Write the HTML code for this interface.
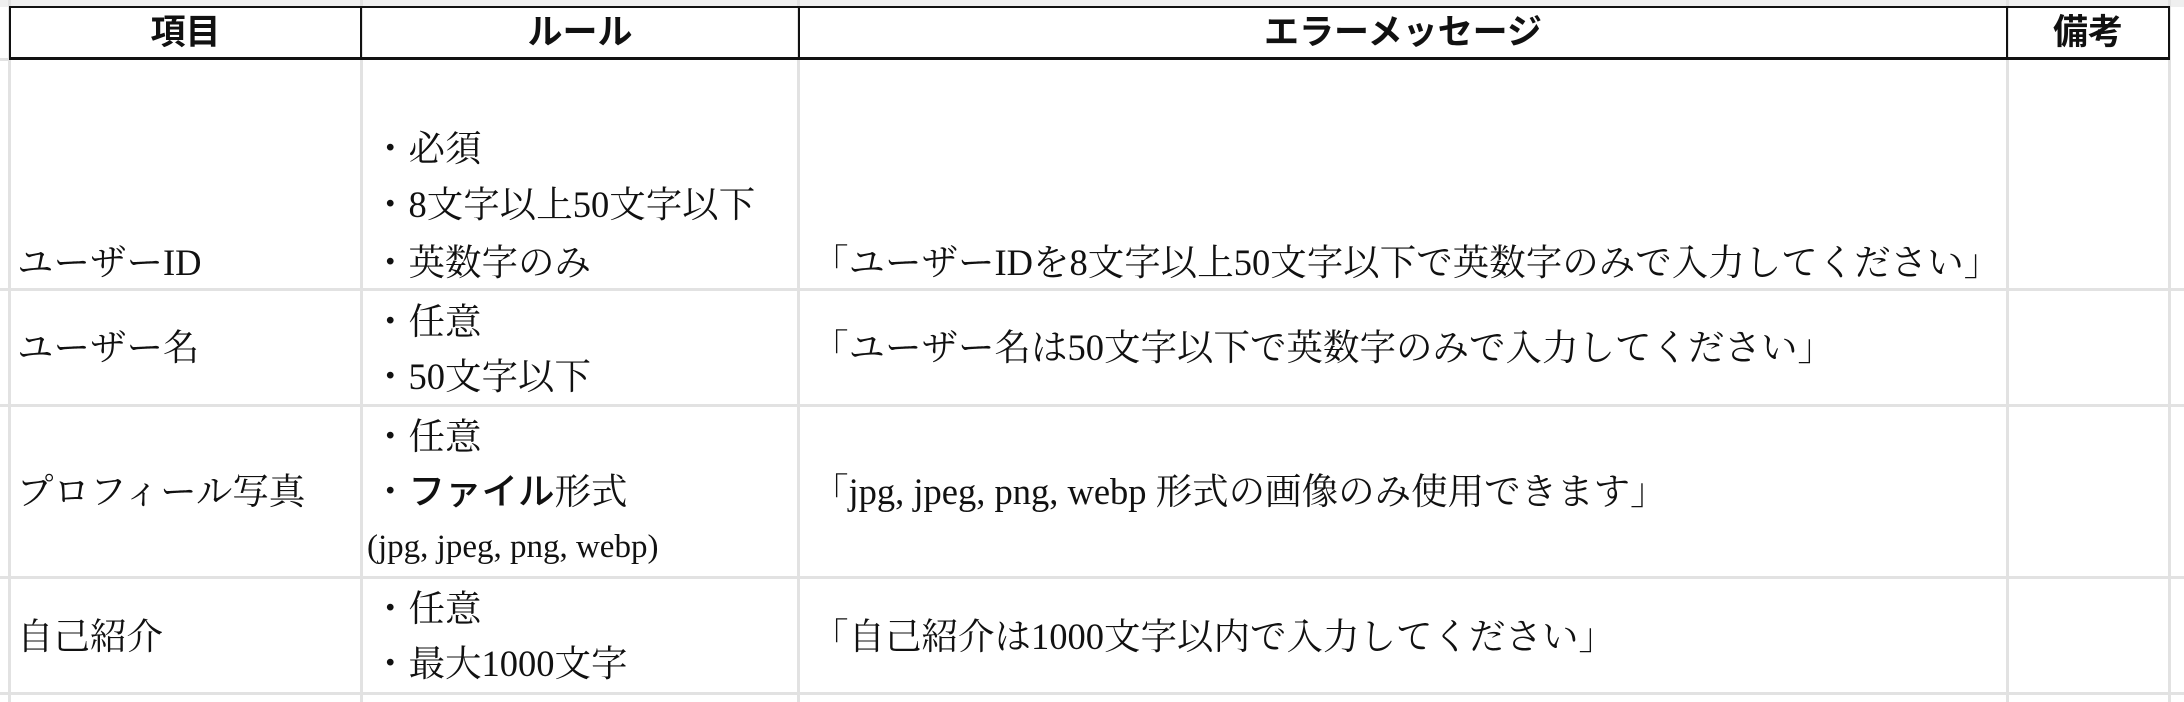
<!DOCTYPE html>
<html><head><meta charset="utf-8"><style>
body{margin:0;width:2184px;height:702px;background:#fff;position:relative;overflow:hidden;font-family:"Liberation Serif","Noto Serif CJK JP","Noto Serif CJK SC",serif;color:#111}
.l{position:absolute;background:#e2e2e2}
.b{position:absolute;background:#111}
.t{position:absolute;font-size:36.5px;line-height:40px;white-space:nowrap;transform:translateY(-50%)}
.h{position:absolute;top:7px;height:51px;line-height:51px;text-align:center;font-family:"Liberation Sans","Noto Sans CJK JP",sans-serif;font-weight:bold;font-size:35px}
.s{font-family:"Liberation Sans","Noto Sans CJK JP",sans-serif;font-weight:500}
</style></head><body>
<div class="l" style="left:0;top:0;width:2184px;height:7px;background:#efefef"></div>
<div class="l" style="left:0;top:288px;width:2184px;height:3px"></div>
<div class="l" style="left:0;top:404px;width:2184px;height:3px"></div>
<div class="l" style="left:0;top:576px;width:2184px;height:3px"></div>
<div class="l" style="left:0;top:692px;width:2184px;height:3px"></div>
<div class="l" style="left:0;top:58px;width:10px;height:3px"></div>
<div class="l" style="left:360px;top:0;width:3px;height:702px"></div>
<div class="l" style="left:797px;top:0;width:3px;height:702px"></div>
<div class="l" style="left:2006px;top:0;width:3px;height:702px"></div>
<div class="l" style="left:2168px;top:0;width:3px;height:702px"></div>
<div class="l" style="left:8px;top:0;width:3px;height:702px"></div>
<div class="b" style="left:9px;top:6px;width:2161px;height:2px"></div>
<div class="b" style="left:9px;top:57px;width:2161px;height:3px"></div>
<div class="b" style="left:9px;top:6px;width:2px;height:54px"></div>
<div class="b" style="left:360px;top:6px;width:2px;height:54px"></div>
<div class="b" style="left:798px;top:6px;width:2px;height:54px"></div>
<div class="b" style="left:2006px;top:6px;width:2px;height:54px"></div>
<div class="b" style="left:2168px;top:6px;width:2px;height:54px"></div>
<div class="h" style="left:10px;width:351px">項目</div>
<div class="h" style="left:361px;width:438px">ルール</div>
<div class="h" style="left:799px;width:1208px">エラーメッセージ</div>
<div class="h" style="left:2007px;width:162px">備考</div>
<div class="t" style="left:17px;top:263px">ユーザーID</div>
<div class="t" style="left:372px;top:149px">・必須</div>
<div class="t" style="left:372px;top:205px">・8文字以上50文字以下</div>
<div class="t" style="left:372px;top:263px">・英数字のみ</div>
<div class="t" style="left:812px;top:263px">「ユーザーIDを8文字以上50文字以下で英数字のみで入力してください」</div>
<div class="t" style="left:17px;top:348px">ユーザー名</div>
<div class="t" style="left:372px;top:322px">・任意</div>
<div class="t" style="left:372px;top:377px">・50文字以下</div>
<div class="t" style="left:812px;top:348px">「ユーザー名は50文字以下で英数字のみで入力してください」</div>
<div class="t" style="left:17px;top:492px">プロフィール写真</div>
<div class="t" style="left:372px;top:437px">・任意</div>
<div class="t" style="left:372px;top:492px">・<span class="s">ファイル</span>形式</div>
<div class="t" style="left:367px;top:547px;font-size:33px">(jpg, jpeg, png, webp)</div>
<div class="t" style="left:812px;top:492px">「jpg, jpeg, png, webp 形式の画像のみ使用できます」</div>
<div class="t" style="left:17px;top:637px">自己紹介</div>
<div class="t" style="left:372px;top:609px">・任意</div>
<div class="t" style="left:372px;top:664px">・最大1000文字</div>
<div class="t" style="left:812px;top:637px">「自己紹介は1000文字以内で入力してください」</div>
</body></html>
